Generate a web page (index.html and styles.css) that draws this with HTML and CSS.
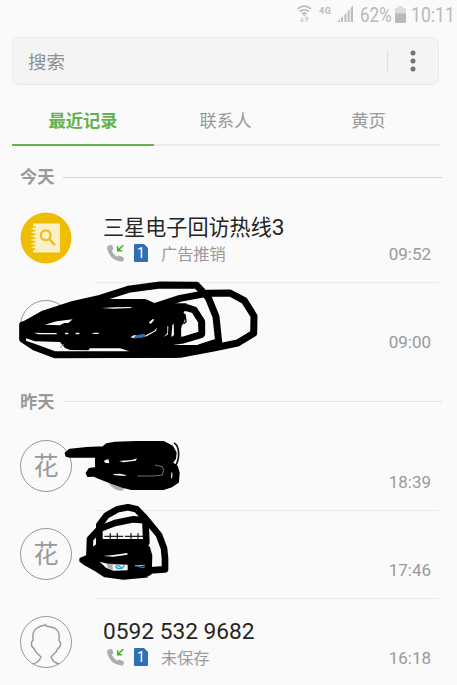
FILE: index.html
```html
<!DOCTYPE html>
<html lang="zh-CN">
<head>
  <meta charset="UTF-8" />
  <meta name="viewport" content="width=device-width, initial-scale=1.0"/>
  <title>最近记录</title>
  <link rel="stylesheet" href="styles.css">
</head>
<body>
  <svg width="0" height="0" class="symbols">
    <symbol id="call-in" viewBox="0 0 18 18">
      <path fill="#acaeaf" d="M1.5 1.4 L4.3 1 Q5.1 1 5.4 1.8 L6.3 4.5 Q6.5 5.3 5.9 5.8 L4.8 6.8 Q6.5 10.5 10.2 12.8 L11.5 11.8 Q12.1 11.3 12.9 11.7 L16.5 13.4 Q17.2 13.8 17 14.6 L16.6 16.2 Q16 17.5 14.3 17.4 Q3.3 16.8 0.2 5 Q-0.2 2 1.5 1.4 Z"/>
      <path fill="none" stroke="#4cae31" stroke-width="1.6" d="M16.2 1.2 L11 6.4 M10.7 2.3 V6.8 H15.2"/>
    </symbol>
  </svg>

  <header class="status">
    <svg class="wifi" width="15" height="18" viewBox="0 0 15 18" fill="none" stroke="#b9b9b9" stroke-width="1.7">
      <path d="M.6 3.8 Q7.3 -1.6 14 3.8 M2.8 6.5 Q7.3 3 11.8 6.5 M4.9 9 Q7.3 7.2 9.7 9"/>
      <circle cx="7.3" cy="10.4" r="1" fill="#b9b9b9" stroke="none"/>
      <path stroke="#d2d2d2" stroke-width="1.3" d="M5 12 V16.5 M3.2 14.6 L5 16.6 L6.8 14.6 M9.8 17 V12.3 M8 14.3 L9.8 12.3 L11.6 14.3"/>
    </svg>
    <span class="net">4G</span>
    <svg class="signal" width="17" height="17" viewBox="0 0 17 17" fill="#bcbcbc">
      <path d="M0 17 L3 14 V17 Z M4 13 L6 11 V17 H4 Z M7.4 10 L9.4 8 V17 H7.4 Z M10.6 6.5 L12.6 4.5 V17 H10.6 Z M13.7 3 L16 .5 V17 H13.7 Z"/>
    </svg>
    <span class="percent"><b>62%</b></span>
    <svg class="battery" width="11" height="17" viewBox="0 0 11 17">
      <path fill="#dcdcdc" d="M3 0 H8 V2 H10 Q11 2 11 3 V8 H0 V3 Q0 2 1 2 H3 Z"/>
      <path fill="#b9b9b9" d="M0 7.5 H11 V16 Q11 17 10 17 H1 Q0 17 0 16 Z"/>
    </svg>
    <span class="clock"><b>10:11</b></span>
  </header>

  <div class="search">
    <span class="search-text">搜索</span>
    <span class="search-sep"></span>
    <svg class="more" width="6" height="22" viewBox="0 0 6 22" fill="#737373">
      <circle cx="3" cy="3" r="2.5"/><circle cx="3" cy="11" r="2.5"/><circle cx="3" cy="19" r="2.5"/>
    </svg>
  </div>

  <nav class="tabs">
    <a class="tab active">最近记录</a>
    <a class="tab">联系人</a>
    <a class="tab">黄页</a>
  </nav>

  <main>
    <h2 class="day">今天</h2>
    <div class="row">
      <svg class="avatar" width="52" height="52" viewBox="0 0 52 52">
        <circle cx="26" cy="26" r="25.5" fill="#efbd04"/>
        <rect x="13" y="11.5" width="27" height="29" rx="1" fill="#fcf0c8"/>
        <path d="M11.5 15 H14.7 M11.5 18.7 H14.7 M11.5 22.4 H14.7 M11.5 26.1 H14.7 M11.5 29.8 H14.7 M11.5 33.5 H14.7 M11.5 37.2 H14.7" stroke="#efbd04" stroke-width="1.7" stroke-linecap="round"/>
        <path d="M11.8 16.8 H15 M11.8 20.5 H15 M11.8 24.2 H15 M11.8 27.9 H15 M11.8 31.6 H15 M11.8 35.3 H15" stroke="#fcf0c8" stroke-width="1.1" stroke-linecap="round"/>
        <circle cx="25.7" cy="23.3" r="4.9" fill="none" stroke="#edbd18" stroke-width="2.2"/>
        <path d="M29.3 27 L34.3 32.5" stroke="#edbd18" stroke-width="2.5" stroke-linecap="round"/>
      </svg>
      <div class="info">
        <p class="name">三星电子回访热线<span class="digit">3</span></p>
        <p class="meta">
          <svg width="18" height="18"><use href="#call-in"/></svg>
          <span class="sim">1</span>
          <span class="note">广告推销</span>
        </p>
      </div>
      <time>09:52</time>
    </div>
    <div class="row">
      <div class="avatar ring"></div>
      <div class="info"></div>
      <time>09:00</time>
      <svg class="scribble first" width="270" height="95" viewBox="0 0 810 285">
        <g fill="none" stroke="#000" stroke-width="21" stroke-linejoin="round" stroke-linecap="round">
          <path d="M72 150 L130 117 L220 88 L300 70 L385 43 L480 30 L590 31 L625 68 L648 125 L656 200 L600 218"/>
          <path d="M460 96 L540 70 L620 55 L690 54 L733 77 L762 123 L761 175 L713 204 L640 219 L540 238 L165 239 L105 217 L68 192 V150"/>
          <path d="M500 98 H560 L583 105 L605 140 V178 L550 195 L500 202"/>
          <path d="M515 125 L546 124 L541 142 L533 158 V190"/>
        </g>
        <path d="M68 140 L130 110 L215 83 L300 72 H436 L465 85 H560 L520 210 H640 L620 225 L530 248 H165 L85 205 L66 160 Z"/>
        <g fill="#fafafa">
          <path d="M134 149 L170 139 L218 133 L205 144 L192 144 L180 151 Z"/>
          <path d="M78 190 L105 199 L180 201 L195 219 L210 225 L265 226 L270 220 L360 220 L388 229 L165 229 L108 208 L78 197 Z"/>
          <path d="M305 99 L345 97 L394 96 V99 L340 101 Z"/>
          <path d="M102 173 L130 174 H170 V178 H115 Z M195 173 H205 V178 H195 Z M227 173 H238 V178 H227 Z M275 177 L283 173 H298 L294 177 Z"/>
          <path d="M446 143 L458 132 L463 134 L453 146 Z"/>
          <path d="M391 187 L403 180 L412 183 L437 181 L462 168 L471 158 L468 168 L440 184 L404 190 Z"/>
          <path d="M491 186 L502 174 L502 154 L505 154 L504 178 Z"/>
          <path d="M514 186 L517 150 L521 146 L522 180 Z"/>
          <path d="M545 184 V152 L555 140 L556 116 L572 116 L593 142 L595 170 Z"/>
        </g>
        <path d="M555 118 L558 140 L551 146" fill="none" stroke="#000" stroke-width="4"/>
        <path d="M180 217 Q188 212 193 207" fill="none" stroke="#999" stroke-width="3"/>
        <path fill="#2f70b2" d="M401 186 L412 180 L432 176 L438 182 L426 188 L403 190 Z"/>
      </svg>
    </div>

    <h2 class="day second">昨天</h2>
    <div class="row">
      <div class="avatar ring">花</div>
      <div class="info"></div>
      <time>18:39</time>
      <svg class="scribble third" width="220" height="120" viewBox="0 0 660 360">
        <path d="M325 308 Q342 334 368 332 L375 322 L350 305 Z" fill="#acaeaf"/>
        <path d="M522 189 Q535 195 536 220 Q536 245 525 260" fill="none" stroke="#111" stroke-width="5"/>
        <path stroke="#000" stroke-width="6" stroke-linejoin="round" d="M197 219 L210 209 L260 204 L309 202 L320 193 L345 188 L410 186 H490 L516 199 L527 218 L525 235 L516 248 L531 260 L536 278 L534 306 L513 320 L490 327 H395 L370 321 L330 307 L300 295 L280 287 L264 288 L260 279 L268 267 L288 264 V230 H210 L199 227 Z"/>
        <g fill="#fafafa">
          <path d="M311 243 L325 237 L328 249 L317 249 Z"/>
          <path d="M357 243 L395 240 L411 235 L407 242 L370 247 Z"/>
          <path d="M338 282 L360 281 L378 285 L376 288 L345 286 Z"/>
          <path d="M514 277 L517 278 V291 L513 297 Z"/>
        </g>
        <path d="M465 255 L487 260 L491 271 L487 285 L460 288 H412" fill="none" stroke="#aaa" stroke-width="2"/>
        <path d="M367 284 L377 287" stroke="#8cc47c" stroke-width="3"/>
      </svg>
    </div>
    <div class="row">
      <div class="avatar ring">花</div>
      <div class="info"></div>
      <time>17:46</time>
      <svg class="scribble fourth" width="220" height="100" viewBox="0 0 660 300">
        <path d="M313 124 H370 M331 115 V131 M352 115 V131 M375 124 H430 M393 115 V131 M414 115 V131" stroke="#222" stroke-width="4"/>
        <g fill="none" stroke="#000" stroke-width="20" stroke-linejoin="round" stroke-linecap="round">
          <path d="M268 195 L270 132 L298 102 L345 84 L400 73 L441 76 L477 120 L492 160 L495 190 V223 L450 226"/>
          <path d="M298 150 V90 L320 61 L352 43 L384 37 L410 43 L436 70 L439 142"/>
        </g>
        <path stroke="#000" stroke-width="8" stroke-linejoin="round" d="M274 164 L292 150 L308 136 H426 L446 158 L453 182 L451 236 L436 244 L370 250 L315 243 L285 224 L256 208 L242 198 V192 L262 184 Z"/>
        <path fill="#fafafa" d="M309 183 L340 180 L383 174 L382 179 L340 185 Z M299 200 L325 207 L383 209 V226 L340 227 L318 218 Z M405 210 H430 V212 H405 Z"/>
        <path fill="#acaeaf" d="M320 206 H338 V226 L323 218 Z"/>
        <path d="M347 212 Q348 222 360 221 Q370 220 373 211 M350 209 L363 217" fill="none" stroke="#24a5d8" stroke-width="4"/>
        <path d="M406 213 H413 L424 217 H432 V208" fill="none" stroke="#2f70b2" stroke-width="4"/>
        <path d="M438 248 L444 241 V249 Z" fill="#2f70b2"/>
      </svg>
    </div>
    <div class="row last">
      <svg class="avatar" width="52" height="52" viewBox="0 0 52 52" fill="none" stroke="#999">
        <circle cx="26" cy="26" r="25.5"/>
        <path stroke-width="1.4" stroke-linejoin="round" d="M13 48 Q18.8 46.5 21 41 L18.5 38.5 Q15 36 14.2 32.5 Q11 31 11.5 26.5 L13 24.5 Q12 15 16.5 12.5 Q20 9.5 24.5 9.2 L25.5 8.2 L26.5 10.2 Q34 10.8 37 14 Q40 17 39 24.5 L40.5 26.5 Q41 31 37.8 32.5 Q37 36 33.5 38.5 L31 41 Q33 46.5 39 48"/>
      </svg>
      <div class="info">
        <p class="name number">0592 532 9682</p>
        <p class="meta">
          <svg width="18" height="18"><use href="#call-in"/></svg>
          <span class="sim">1</span>
          <span class="note">未保存</span>
        </p>
      </div>
      <time>16:18</time>
    </div>
  </main>
</body>
</html>
```
FILE: styles.css
```css
* { box-sizing: border-box; margin: 0; padding: 0; }
body {
  width: 457px;
  height: 685px;
  overflow: hidden;
  font-family: Roboto, "Noto Sans CJK SC", sans-serif;
  background: #fafafa;
  color: #999;
}
.symbols {
  display: block;
}

.status {
  display: flex;
  height: 37px;
  padding: 5px 0 0 297px;
  color: #b9b9b9;
}
.status > * {
  flex: none;
}
.status b {
  display: inline-block;
  font-weight: normal;
  font-size: 20.5px;
  line-height: 20px;
  transform-origin: left center;
}
.net {
  width: 17px;
  margin-left: 7px;
  font-size: 9px;
  line-height: 12px;
  font-weight: bold;
  letter-spacing: 0.6px;
}
.signal {
  margin-left: 1px;
}
.percent {
  width: 35px;
  margin-left: 6px;
}
.percent b {
  transform: scaleX(0.83);
}
.battery {
  margin-top: 1px;
}
.clock {
  margin-left: 5px;
}
.clock b {
  transform: scaleX(0.86);
}

.search {
  display: flex;
  align-items: center;
  width: 427px;
  height: 48px;
  margin-left: 12px;
  padding: 0 22px 0 15px;
  background: #f4f4f4;
  border: 1px solid #e9e9e9;
  border-radius: 7px;
}
.search-text {
  flex: 1;
  font-size: 18.5px;
  color: #8f8f8f;
}
.search-sep {
  width: 1px;
  height: 21px;
  margin-right: 22px;
  background: #e0e0e0;
}

.tabs {
  display: grid;
  grid-template-columns: 142px 143px 143px;
  width: 428px;
  height: 61px;
  margin-left: 12px;
}
.tab {
  padding-top: 13px;
  line-height: 46px;
  font-size: 17.3px;
  text-align: center;
  border-bottom: 2px solid #eaeaea;
}
.tab.active {
  color: #64b14e;
  font-weight: bold;
  border-color: #64b14e;
}

.day {
  display: flex;
  align-items: center;
  height: 49px;
  padding: 13px 15px 0 20px;
  font-size: 17.3px;
  line-height: 24px;
}
.day::after {
  content: "";
  flex: 1;
  height: 1px;
  margin-left: 8px;
  background: #d3d5d4;
}
.day.second {
  height: 52px;
  padding-top: 9px;
}
.day.second::after {
  background: #e2e2e2;
}

.row {
  position: relative;
  display: flex;
  height: 88px;
  padding: 17px 26px 0 20px;
}
.row + .row::before {
  content: "";
  position: absolute;
  top: -1px;
  left: 96px;
  right: 18px;
  height: 1px;
  background: #eaeaea;
}
.avatar {
  flex: none;
  width: 52px;
  height: 52px;
}
.ring {
  border: 1px solid #999;
  border-radius: 50%;
  font-size: 25px;
  line-height: 52px;
  text-align: center;
}
.info {
  flex: 1;
  padding-left: 31px;
}
.name {
  height: 32px;
  line-height: 32px;
  font-size: 21.1px;
  color: #252525;
  white-space: nowrap;
}
.digit, .number {
  font-size: 22.7px;
}
.meta {
  display: flex;
  align-items: center;
  height: 18px;
  padding-left: 4px;
}
.sim {
  width: 14px;
  height: 18px;
  margin-left: 9px;
  background: #2f70b2;
  border-radius: 1px;
  clip-path: polygon(0 0, 10px 0, 14px 4px, 14px 18px, 0 18px);
  color: #fff;
  font-size: 14px;
  line-height: 18px;
  text-align: center;
}
.note {
  margin-left: 13px;
  font-size: 16.2px;
}
time {
  margin-top: 32px;
  font-size: 17px;
  line-height: 20px;
}

.scribble {
  position: absolute;
  left: 0;
}
.first { top: -8px; }
.third { top: -43px; }
.fourth { top: -16px; }
```
